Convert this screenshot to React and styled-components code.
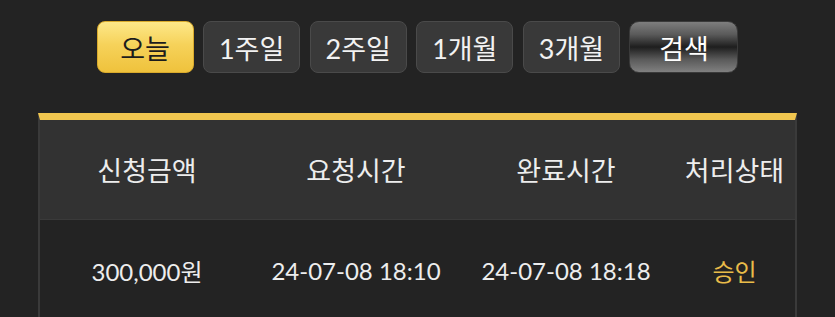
import React, { useState } from 'react';
import styled, { createGlobalStyle, css } from 'styled-components';

const GlobalStyle = createGlobalStyle`
    * { box-sizing: border-box; }
    html, body {
        margin: 0;
        padding: 0;
        background-color: #232323;
        font-family: "Lato", "Noto Sans CJK KR", sans-serif;
    }
`

const Page = styled.div`
    width: 835px;
    height: 317px;
    overflow: hidden;
    background-color: #232323;
    padding-top: 21px;
`

const Filters = styled.div`
    display: flex;
    justify-content: center;
    gap: 9.6px;
`

const FilterButton = styled.button`
    height: 52px;
    width: ${props => props.wide ? '109px' : '97px'};
    padding: 0;
    border-radius: 8px;
    font-family: "Lato", "Noto Sans CJK KR", sans-serif;
    font-size: 27px;
    cursor: pointer;
    border: 1px solid #4a4a4a;
    background-color: #393939;
    color: #f2f2f2;

    ${props => props.active && css`
        border: 1px solid #d9aa2c;
        background: linear-gradient(to bottom, #fde889 0%, #f6d25a 45%, #efc23c 100%);
        color: #1c1c1c;
    `}

    ${props => props.search && css`
        border: 1px solid #3a3a3a;
        background: linear-gradient(to bottom, #7e7e7e 0%, #5a5a5a 25%, #1e1e1e 50%, #5a5a5a 75%, #808080 100%);
        color: #ffffff;
        border-radius: 10px;
    `}
`

const Table = styled.div`
    margin: 40px 38px 0;
    border-top: 7px solid #f1c64f;
    border-left: 2px solid #3a3a3a;
    border-right: 2px solid #3a3a3a;
`

const Row = styled.div`
    display: grid;
    grid-template-columns: 214px 204px 216px 1fr;
    height: 100px;
    align-items: center;
    background-color: ${props => props.head ? '#323232' : '#232323'};
    border-bottom: ${props => props.head ? '1px solid #3a3a3a' : 'none'};
`

const Cell = styled.div`
    text-align: center;
    font-size: ${props => props.head ? '27px' : '24px'};
    color: ${props => props.gold ? '#e9bc49' : '#ededed'};
    white-space: nowrap;
`

const periods = ['오늘', '1주일', '2주일', '1개월', '3개월'];

const App = () => {
    const [period, setPeriod] = useState('오늘');

    return (
        <Page>
            <GlobalStyle />
            <Filters>
                {periods.map(p => (
                    <FilterButton key={p} active={p === period} onClick={() => setPeriod(p)}>{p}</FilterButton>
                ))}
                <FilterButton wide search>검색</FilterButton>
            </Filters>
            <Table>
                <Row head>
                    <Cell head>신청금액</Cell>
                    <Cell head>요청시간</Cell>
                    <Cell head>완료시간</Cell>
                    <Cell head>처리상태</Cell>
                </Row>
                <Row>
                    <Cell>300,000원</Cell>
                    <Cell>24-07-08 18:10</Cell>
                    <Cell>24-07-08 18:18</Cell>
                    <Cell gold>승인</Cell>
                </Row>
            </Table>
        </Page>
    )
}

export default App
